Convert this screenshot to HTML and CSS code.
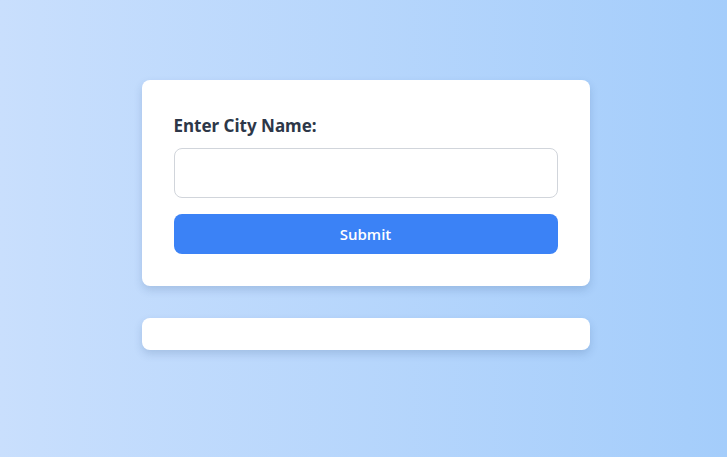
FILE: index.html
```html
<!DOCTYPE html>
<html lang="en">
<head>
<meta charset="utf-8">
<title>Weather</title>
<link rel="stylesheet" href="styles.css">
</head>
<body>
<main class="page">
  <form class="card form-card">
    <label class="label" for="city">Enter City Name:</label>
    <input class="input" id="city" type="text">
    <button class="button" type="button">Submit</button>
  </form>
  <section class="card result-card"></section>
</main>
</body>
</html>
```

FILE: styles.css
```css
* { box-sizing: border-box; }
html, body { margin: 0; height: 100%; }
body {
  background: linear-gradient(to right, #c9dffd, #a4cdfb);
  font-family: "Segoe UI", "Noto Sans", "Open Sans", sans-serif;
}
.page {
  width: 448px;
  margin: 0 auto;
  padding-top: 80px;
  position: relative;
  left: 2px;
}
.card {
  background: #fff;
  border-radius: 8px;
  box-shadow: 0 4px 8px rgba(40, 70, 120, 0.18);
}
.form-card {
  padding: 32px;
  display: flex;
  flex-direction: column;
}
.label {
  font-size: 17px;
  font-weight: 700;
  color: #2d3748;
  line-height: 28px;
  margin-bottom: 8px;
}
.input {
  height: 50px;
  border: 1px solid #d1d5db;
  border-radius: 8px;
  padding: 12px;
  font-size: 16px;
  outline: none;
}
.button {
  margin-top: 16px;
  height: 40px;
  border: 0;
  border-radius: 8px;
  background: #3b82f6;
  color: #fff;
  font-family: "Open Sans", "Noto Sans", sans-serif;
  font-size: 15px;
  font-weight: 600;
}
.result-card {
  margin-top: 32px;
  height: 32px;
}
```
